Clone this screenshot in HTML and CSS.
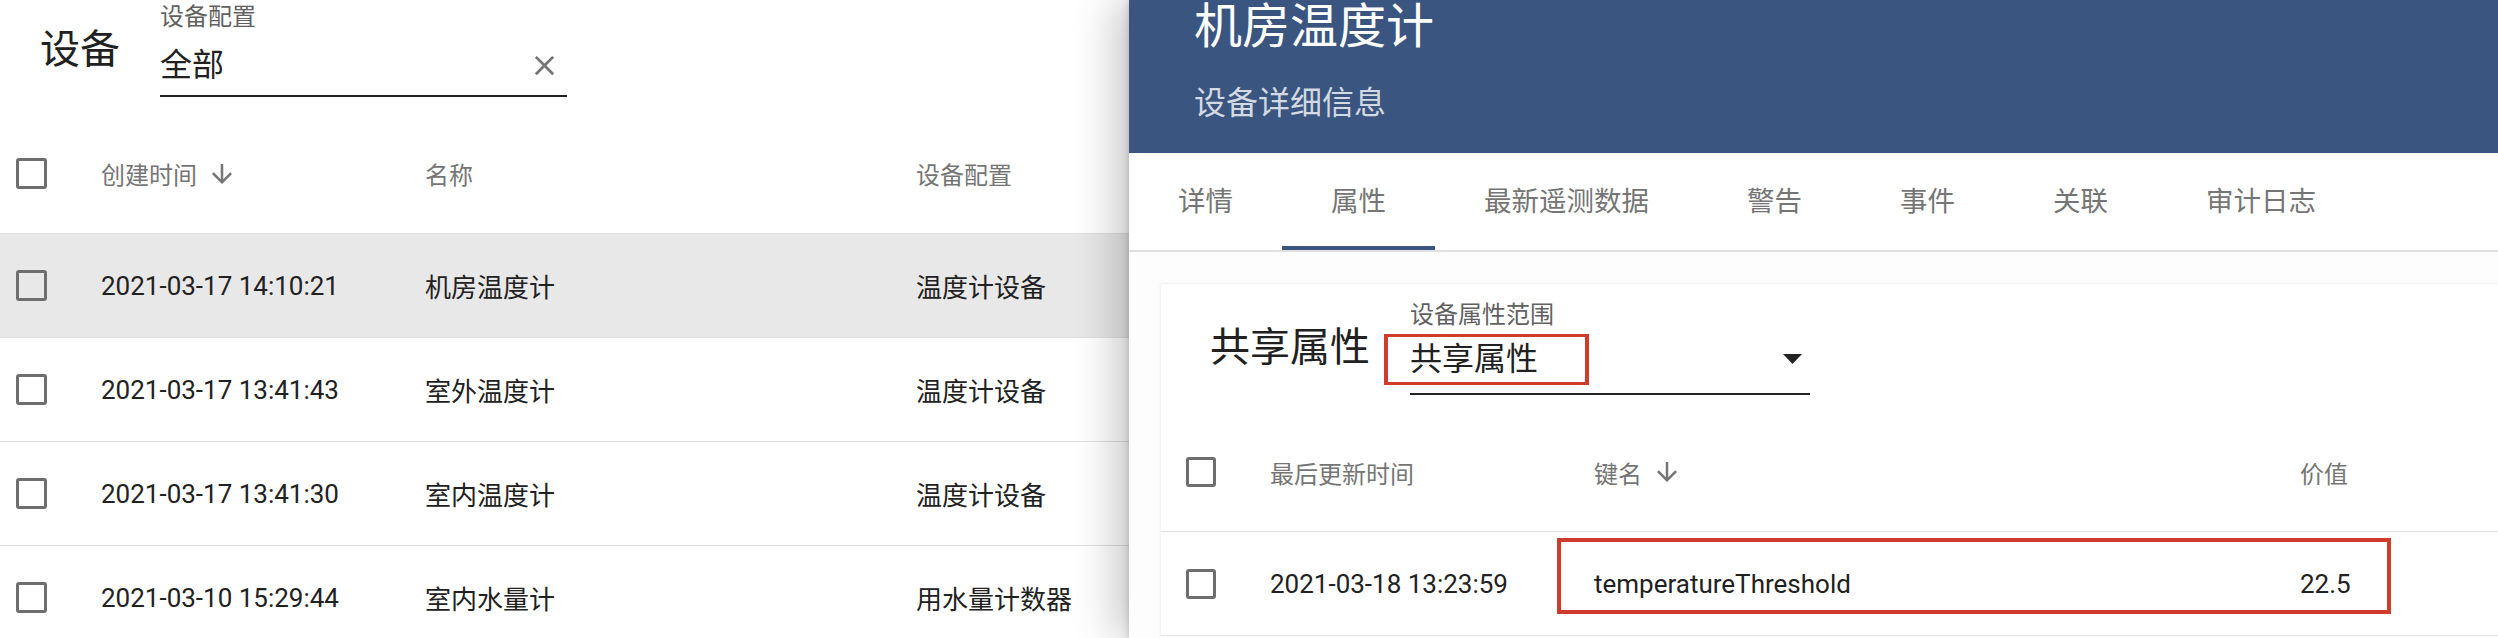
FILE: index.html
```html
<!DOCTYPE html>
<html>

	<head>
		<meta charset="UTF-8">
		<title>设备</title>
		<link rel="stylesheet" href="styles.css">
	</head>

	<body>
		<div class="page">
			<!-- 设备列表 -->
			<div class="list">
				<div class="list-head">
					<div class="list-title">设备</div>
					<div class="field field-filter">
						<div class="field-label">设备配置</div>
						<div class="field-value">
							<span>全部</span>
							<svg class="clear-icon" viewBox="0 0 24 24"><path d="M19 6.41L17.59 5 12 10.59 6.41 5 5 6.41 10.59 12 5 17.59 6.41 19 12 13.41 17.59 19 19 17.59 13.41 12z"/></svg>
						</div>
					</div>
				</div>
				<div class="row row-head list-grid">
					<div class="cell-check"><span class="checkbox"></span></div>
					<div class="cell">创建时间<svg class="sort-icon" viewBox="0 0 24 24"><path d="M20 12l-1.41-1.41L13 16.17V4h-2v12.17l-5.58-5.59L4 12l8 8 8-8z"/></svg></div>
					<div class="cell">名称</div>
					<div class="cell">设备配置</div>
				</div>
				<div class="row list-grid selected">
					<div class="cell-check"><span class="checkbox"></span></div>
					<div class="cell">2021-03-17 14:10:21</div>
					<div class="cell">机房温度计</div>
					<div class="cell">温度计设备</div>
				</div>
				<div class="row list-grid">
					<div class="cell-check"><span class="checkbox"></span></div>
					<div class="cell">2021-03-17 13:41:43</div>
					<div class="cell">室外温度计</div>
					<div class="cell">温度计设备</div>
				</div>
				<div class="row list-grid">
					<div class="cell-check"><span class="checkbox"></span></div>
					<div class="cell">2021-03-17 13:41:30</div>
					<div class="cell">室内温度计</div>
					<div class="cell">温度计设备</div>
				</div>
				<div class="row list-grid">
					<div class="cell-check"><span class="checkbox"></span></div>
					<div class="cell">2021-03-10 15:29:44</div>
					<div class="cell">室内水量计</div>
					<div class="cell">用水量计数器</div>
				</div>
			</div>

			<!-- 设备详情 -->
			<div class="drawer">
				<div class="drawer-head">
					<div class="drawer-title">机房温度计</div>
					<div class="drawer-subtitle">设备详细信息</div>
				</div>
				<div class="tabs">
					<div class="tab">详情</div>
					<div class="tab active">属性</div>
					<div class="tab">最新遥测数据</div>
					<div class="tab">警告</div>
					<div class="tab">事件</div>
					<div class="tab">关联</div>
					<div class="tab">审计日志</div>
				</div>
				<div class="drawer-body">
					<div class="card">
						<div class="card-head">
							<div class="card-title">共享属性</div>
							<div class="field field-scope">
								<div class="field-label">设备属性范围</div>
								<div class="field-value">
									<span>共享属性</span>
									<svg class="drop-icon" viewBox="0 0 19 10"><path d="M0 0H19L9.5 10z"/></svg>
								</div>
							</div>
						</div>
						<div class="row row-head attr-grid">
							<div class="cell-check"><span class="checkbox"></span></div>
							<div class="cell">最后更新时间</div>
							<div class="cell">键名<svg class="sort-icon" viewBox="0 0 24 24"><path d="M20 12l-1.41-1.41L13 16.17V4h-2v12.17l-5.58-5.59L4 12l8 8 8-8z"/></svg></div>
							<div class="cell">价值</div>
						</div>
						<div class="row attr-grid">
							<div class="cell-check"><span class="checkbox"></span></div>
							<div class="cell">2021-03-18 13:23:59</div>
							<div class="cell">temperatureThreshold</div>
							<div class="cell">22.5</div>
						</div>
						<!-- 标注框 -->
						<div class="mark mark-scope"></div>
						<div class="mark mark-row"></div>
					</div>
				</div>
			</div>
		</div>
	</body>

</html>
```

FILE: styles.css
```css
* {
	padding: 0;
	margin: 0;
	box-sizing: border-box;
}

body {
	width: 2498px;
	height: 638px;
	overflow: hidden;
	background: #fff;
	color: #212121;
	font-family: Roboto, "Noto Sans CJK SC", sans-serif;
}

.page {
	position: relative;
	width: 2498px;
	height: 638px;
	overflow: hidden;
}

/* 左侧列表 */
.list-head {
	display: flex;
	align-items: flex-start;
	height: 121px;
	padding-left: 40px;
}

.list-title {
	margin-top: 30px;
	font-size: 40px;
	line-height: 40px;
}

.field-label {
	font-size: 24px;
	line-height: 28px;
	color: #616161;
}

.field-value {
	display: flex;
	align-items: center;
	justify-content: space-between;
	height: 40px;
	font-size: 32px;
	line-height: 40px;
	box-sizing: content-box;
	border-bottom: 2px solid #222;
}

.field-filter {
	width: 407px;
	margin-left: 40px;
	margin-top: 3px;
}

.field-filter .field-value {
	margin-top: 14px;
	padding-bottom: 10px;
}

.clear-icon {
	width: 33px;
	height: 33px;
	margin-right: 6px;
	fill: #757575;
}

.row {
	display: grid;
	align-items: center;
	height: 104px;
	font-size: 26px;
	border-bottom: 1px solid #e0e0e0;
}

.row-head {
	height: 113px;
	padding-bottom: 7px;
	font-size: 24px;
	color: #757575;
}

.list-grid {
	grid-template-columns: 101px 324px 491px 1fr;
}

.list-grid .cell-check {
	padding-left: 16px;
}

.selected {
	background: #e8e8e8;
}

.cell {
	display: flex;
	align-items: center;
	white-space: nowrap;
}

.cell-check {
	display: flex;
	align-items: center;
}

.checkbox {
	display: block;
	width: 31px;
	height: 31px;
	border: 3px solid #6e6e6e;
	border-radius: 3px;
}

.sort-icon {
	width: 30px;
	height: 30px;
	margin-left: 10px;
	fill: #757575;
}

/* 右侧详情 */
.drawer {
	position: absolute;
	top: 0;
	left: 1129px;
	width: 1369px;
	height: 638px;
	overflow: hidden;
	background: #fff;
	box-shadow: -14px 0 40px rgba(0, 0, 0, 0.22), -2px 0 6px rgba(0, 0, 0, 0.12);
}

.drawer-head {
	height: 153px;
	padding-left: 65px;
	background: #3a5680;
	color: #fff;
}

.drawer-title {
	font-size: 48px;
	line-height: 53px;
}

.drawer-subtitle {
	margin-top: 30px;
	font-size: 32px;
	line-height: 40px;
	color: rgba(255, 255, 255, 0.78);
}

.tabs {
	display: flex;
	border-bottom: 2px solid #e0e0e0;
}

.tab {
	height: 97px;
	padding: 4px 49px 0;
	font-size: 27.5px;
	line-height: 89px;
	color: #757575;
	white-space: nowrap;
	border-bottom: 4px solid transparent;
}

.tab.active {
	border-bottom-color: #3a5680;
}

.drawer-body {
	padding: 32px 0 0 32px;
	background: #fdfdfd;
	height: 386px;
}

.card {
	position: relative;
	width: 1500px;
	height: 400px;
	background: #fff;
	box-shadow: 0 0 3px rgba(0, 0, 0, 0.1);
}

.card-head {
	display: flex;
	align-items: flex-start;
	height: 135px;
	padding-left: 49px;
}

.card-title {
	margin-top: 40px;
	font-size: 40px;
	line-height: 48px;
}

.field-scope {
	width: 400px;
	margin-left: 40px;
	margin-top: 17px;
}

.field-scope .field-value {
	margin-top: 10px;
	padding-bottom: 14px;
}

.drop-icon {
	width: 19px;
	height: 10px;
	margin-right: 8px;
	fill: #222;
}

.attr-grid {
	grid-template-columns: 109px 324px 706px 1fr;
}

.attr-grid.row-head {
	padding-bottom: 6px;
}

.attr-grid .cell-check {
	padding-left: 25px;
}

.attr-grid .checkbox {
	width: 30px;
	height: 30px;
}

.mark {
	position: absolute;
	border: 4px solid #d13b2c;
}

.mark-scope {
	left: 223px;
	top: 50px;
	width: 205px;
	height: 51px;
	border-width: 3px 4px;
}

.mark-row {
	left: 396px;
	top: 254px;
	width: 834px;
	height: 76px;
}
```
